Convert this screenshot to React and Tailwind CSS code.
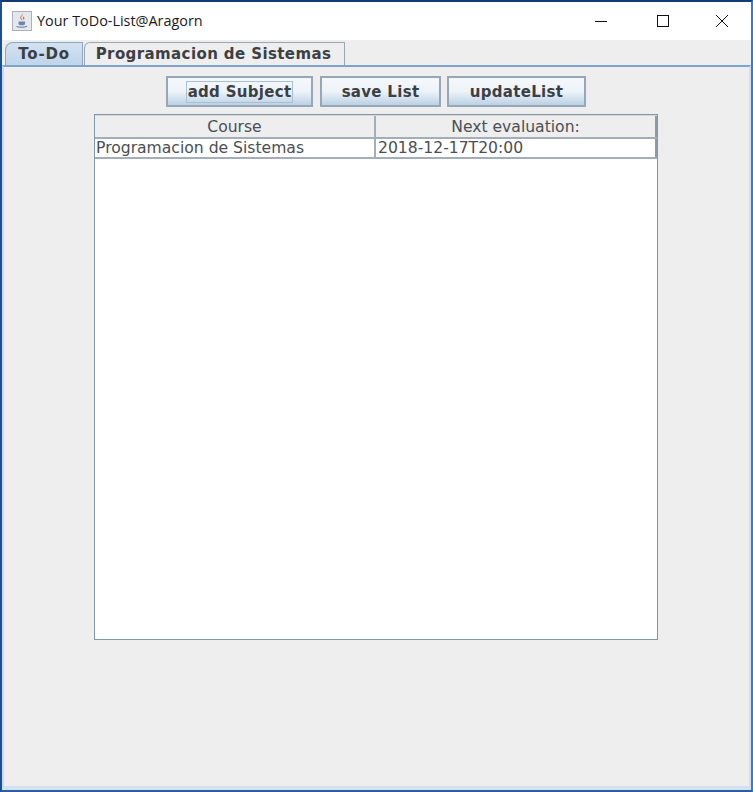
import React from "react";

const dejavu = "font-['DejaVu_Sans',sans-serif]";

function JavaIcon() {
  return (
    <svg width="20" height="20" viewBox="0 0 20 20" className="shrink-0">
      <rect x="0.5" y="0.5" width="19" height="19" fill="#e4e8ee" stroke="#a9b1bc" />
      <path d="M10.500 2.500c1 1.700-2 2.800-1.200 4.800.3.700 1 1.200 1 1.900-.9-.6-2.400-1.600-1.900-3.200C8.800 4.800 10.500 4.200 10.500 2.500z" fill="#d9531e" />
      <path d="M12.300 5c-1.600.9-1.600 1.700-1.100 2.700.2.500.2 1-.2 1.500 1.500-.7 1.800-1.700 1.100-2.700-.3-.5-.1-1 .2-1.500z" fill="#e76f00" />
      <path d="M6.500 10.500h6.500v2.300c0 1-1 1.500-3.200 1.500s-3.300-.5-3.300-1.500z" fill="#6d87a3" />
      <path d="M4.500 15.500c2.500 1 8.500 1 10.500-.2" fill="none" stroke="#5b7a9b" strokeWidth="1" />
    </svg>
  );
}

function Btn({ w, children, focus }) {
  return (
    <button
      className={`${w} h-[31px] flex items-center justify-center pt-px border-2 border-[#97a7b6] bg-gradient-to-b from-[#f4f8fb] via-[#eef3f8] to-[#bad1e5] text-[15px] font-bold tracking-[0.3px] text-[#3a4045] ${dejavu}`}
    >
      {focus ? (
        <span className="border border-[#a9c0d4] leading-[20px] px-px">{children}</span>
      ) : (
        children
      )}
    </button>
  );
}

export default function App() {
  return (
    <div className="w-[753px] h-[792px] flex flex-col overflow-hidden bg-[#eeeeee] border-t-2 border-t-[#123a73] border-l-2 border-l-[#1d4f8c] border-r-2 border-r-[#2f7fc9] border-b-2 border-b-[#2a5f9e]">
      {/* Title bar */}
      <div className="h-[38px] shrink-0 bg-white flex items-center pl-[10px]">
        <JavaIcon />
        <span className="ml-[5px] text-[14.4px] text-[#1a1a1a] font-['Open_Sans',sans-serif]">
          Your ToDo-List@Aragorn
        </span>
        <div className="ml-auto flex items-center text-black">
          <svg width="46" height="14" viewBox="0 0 46 14"><path d="M5 7.500h12" stroke="#111" strokeWidth="1" /></svg>
          <svg width="58" height="14" viewBox="0 0 58 14"><rect x="21.500" y="1.500" width="11" height="11" fill="none" stroke="#111" /></svg>
          <svg width="57" height="14" viewBox="0 0 57 14"><path d="M22 1l12 12M34 1L22 13" stroke="#111" strokeWidth="1" fill="none" /></svg>
        </div>
      </div>

      {/* Tabs */}
      <div className="h-[25px] shrink-0 flex items-end pl-[3px]">
        <div className={`w-[78px] h-[23px] rounded-tl-[8px] border border-[#8ea6bf] border-b-0 bg-gradient-to-b from-[#d3e2f0] to-[#bfd5ea] flex items-center justify-center pt-px text-[15px] font-bold tracking-[0.8px] text-[#3a4045] ${dejavu}`}>
          To-Do
        </div>
        <div className={`w-[261px] h-[23px] ml-px rounded-tl-[6px] border border-[#9aa6b2] border-b-0 bg-[#eeeeee] flex items-center justify-center pt-px pr-[2px] text-[15px] font-bold tracking-[0.4px] text-[#3a4045] ${dejavu}`}>
          Programacion de Sistemas
        </div>
      </div>

      {/* Tab content */}
      <div className="flex-1 border-t-2 border-t-[#7ea3cc] border-l-2 border-l-[#c9d9e8] border-r-2 border-r-[#d3e0ec] border-b-4 border-b-[#d4e1ee] flex flex-col">
        <div className="flex pl-[162px] pt-[9px]">
          <Btn w="w-[147px]" focus>add Subject</Btn>
          <div className="ml-[7px]"><Btn w="w-[121px]">save List</Btn></div>
          <div className="ml-[6px]"><Btn w="w-[139px]">updateList</Btn></div>
        </div>

        <div className={`ml-[90px] mt-[7px] w-[564px] h-[526px] border border-[#8397ab] bg-white text-[15.6px] text-[#4a4f54] ${dejavu}`}>
          <div className="h-[24px] flex bg-[#eeeeee] border-t border-[#d8d8d8] border-b-2 border-b-[#a3aeb9]">
            <div className="w-[281px] flex items-center justify-center pt-[3px] border-r-2 border-r-[#a3aeb9]">Course</div>
            <div className="flex-1 flex items-center justify-center pt-[3px] border-r-2 border-r-[#8e9aa6]">Next evaluation:</div>
          </div>
          <div className="h-[20px] flex border-b-2 border-b-[#a3aeb9]">
            <div className="w-[281px] flex items-center pl-px pt-[2px] border-r-2 border-r-[#a3aeb9]">Programacion de Sistemas</div>
            <div className="flex-1 flex items-center pl-[2px] pt-[2px] border-r-2 border-r-[#8e9aa6]">2018-12-17T20:00</div>
          </div>
        </div>
      </div>
    </div>
  );
}
